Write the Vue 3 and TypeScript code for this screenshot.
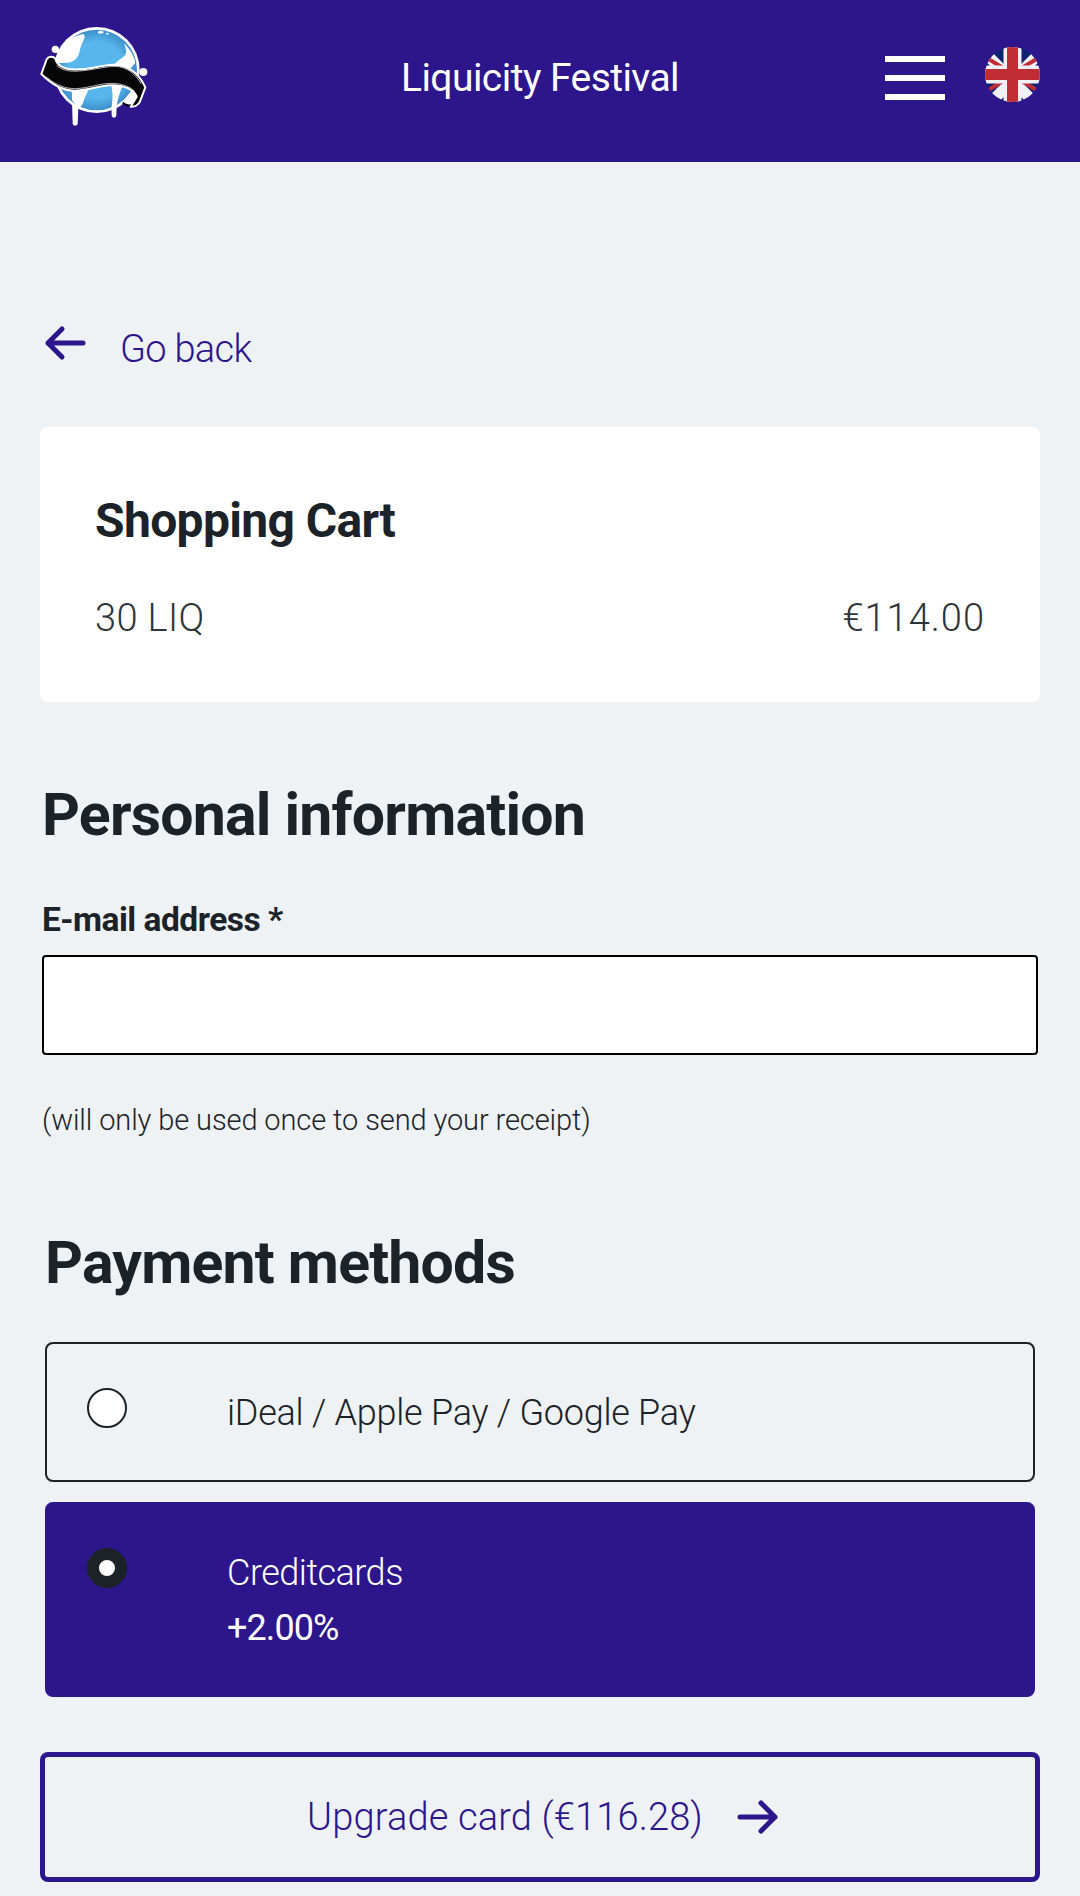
<script setup lang="ts">
const title: string = 'Liquicity Festival'
</script>

<template>
  <div class="page">
    <header class="header">
      <svg class="logo" viewBox="120 60 360 330" width="120" height="110" aria-label="logo">
        <defs>
          <radialGradient id="globe-blue" cx="50%" cy="50%" r="50%">
            <stop offset="70%" stop-color="#58b6ec" />
            <stop offset="100%" stop-color="#3d8fcb" />
          </radialGradient>
        </defs>
        <g fill="#fff">
          <circle cx="166" cy="148" r="11" />
          <circle cx="430" cy="216" r="12" />
          <path d="M216 300H236L233 372A8 8 0 0 1 218 372Z" />
          <path d="M334 290H351L349 346A7 7 0 0 1 335 346Z" />
          <circle cx="290" cy="210" r="129" />
        </g>
        <circle cx="290" cy="210" r="121" fill="url(#globe-blue)" />
        <g fill="#fff">
          <path d="M248 102C264 106 244 128 240 150C236 172 222 190 196 188L170 190C168 168 182 138 204 122C218 112 232 106 248 102Z" />
          <path d="M372 130C384 142 400 160 406 188L392 205L340 196C346 186 366 176 376 164C382 154 376 142 372 130Z" />
          <path d="M216 262H268C262 280 252 296 248 312L236 328L216 300Z" />
          <path d="M332 250H372C362 270 352 296 350 322L334 328C338 302 340 276 332 250Z" />
          <ellipse cx="302" cy="97" rx="9" ry="4" />
          <ellipse cx="322" cy="101" rx="4" ry="2.500" />
        </g>
        <path d="M402 262C412 278 416 298 402 312C390 320 376 316 368 308" fill="#fff" stroke="#080808" stroke-width="6" />
        <path d="M124 222L140 178C146 168 160 168 166 176C172 198 196 210 236 208C280 206 300 196 340 194C388 194 420 226 436 262L420 304C416 314 404 322 392 320L410 290C402 270 374 254 330 256C296 258 266 270 222 272C184 272 150 248 124 222Z" fill="#060606" stroke="#fff" stroke-width="6" stroke-linejoin="round" />
        <path d="M170 196C188 212 210 215 238 213C280 210 310 200 344 199C382 200 406 222 424 252M140 232C170 256 196 266 226 266C270 264 300 250 332 250C364 250 388 258 404 274" fill="none" stroke="#d8d8d8" stroke-width="2.500" />
      </svg>
      <h1 class="brand">{{ title }}</h1>
      <div class="burger"><span></span><span></span><span></span></div>
      <svg class="flag" viewBox="0 0 55 55" width="55" height="55" aria-label="English">
        <defs><clipPath id="flag-circle"><circle cx="27.500" cy="27.500" r="27.500" /></clipPath></defs>
        <g clip-path="url(#flag-circle)">
          <rect width="55" height="55" fill="#0d2273" />
          <path d="M0 6L49 55M55 6L6 55" stroke="#f0f0f6" stroke-width="11" />
          <path d="M0 10L20 22M55 10L35 22M0 45L20 33M35 33L55 45" stroke="#c12c35" stroke-width="4" />
          <path d="M27.500 0V55M0 27.500H55" stroke="#f0f0f6" stroke-width="18" />
          <path d="M27.500 0V55M0 27.500H55" stroke="#c12c35" stroke-width="11" />
        </g>
      </svg>
    </header>

    <main class="content">
      <a class="back">
        <svg viewBox="0 0 42 36" width="42" height="36"><path d="M39 18H4M18 4L4 18L18 32" /></svg>
        <span>Go back</span>
      </a>

      <section class="cart">
        <h2>Shopping Cart</h2>
        <div class="cart-row"><span>30 LIQ</span><span>€114.00</span></div>
      </section>

      <section class="personal">
        <h2 class="heading">Personal information</h2>
        <label class="label" for="email">E-mail address *</label>
        <input id="email" class="input" type="email" />
        <p class="hint">(will only be used once to send your receipt)</p>
      </section>

      <section class="payment">
        <h2 class="heading">Payment methods</h2>
        <div class="option">
          <span class="radio"></span>
          <div class="option-text">iDeal / Apple Pay / Google Pay</div>
        </div>
        <div class="option selected">
          <span class="radio checked"></span>
          <div class="option-text">Creditcards<div class="fee">+2.00%</div></div>
        </div>
      </section>

      <button class="submit" type="button">
        <span>Upgrade card (€116.28)</span>
        <svg viewBox="0 0 42 36" width="42" height="36"><path d="M3 18H38M24 4L38 18L24 32" /></svg>
      </button>
    </main>
  </div>
</template>

<style>
html, body { margin: 0; background: #eef2f5; }
</style>

<style scoped>
* { box-sizing: border-box; }
.page {
  width: 1080px;
  height: 1896px;
  overflow: hidden;
  background: #eef2f5;
  color: #1b2228;
  font-family: Roboto, "Liberation Sans", sans-serif;
}
.header {
  position: relative;
  height: 162px;
  background: #2d158c;
  display: flex;
  align-items: center;
  padding: 0 40px;
}
.logo { margin-top: -12px; }
.brand {
  position: absolute;
  left: 0;
  right: 0;
  margin: 0;
  text-align: center;
  color: #fff;
  font-size: 39px;
  font-weight: 400;
  letter-spacing: -0.55px;
  top: 53px;
  line-height: 50px;
}
.burger {
  margin-left: auto;
  width: 60px;
  display: flex;
  flex-direction: column;
  gap: 12.500px;
  margin-top: -6px;
}
.burger span { display: block; height: 6.500px; background: #fff; }
.flag { margin-left: 40px; margin-top: -13px; }
.content { padding: 0 40px; }
.back {
  display: flex;
  align-items: center;
  gap: 34px;
  margin: 162px 0 0 4px;
  height: 50px;
  color: #2d158c;
  font-size: 38px;
  font-weight: 300;
  letter-spacing: -0.7px;
}
.back svg { margin-top: -12px; }
.back svg path, .submit svg path {
  fill: none;
  stroke: #2d158c;
  stroke-width: 5;
  stroke-linecap: round;
  stroke-linejoin: round;
}
.cart {
  margin-top: 53px;
  height: 275px;
  background: #fff;
  border-radius: 8px;
  padding: 64px 55px 0;
}
.cart h2 {
  margin: 0;
  font-size: 48px;
  line-height: 60px;
  font-weight: 700;
  letter-spacing: -0.65px;
}
.cart-row {
  display: flex;
  justify-content: space-between;
  margin-top: 44px;
  font-size: 38px;
  line-height: 46px;
  font-weight: 300;
  letter-spacing: 0.4px;
  color: #2f3438;
}
.cart-row span:last-child { letter-spacing: 1px; }
.personal { margin: 0 2px; }
.heading {
  margin: 0;
  font-size: 59px;
  line-height: 70px;
  font-weight: 700;
  letter-spacing: -0.8px;
}
.personal .heading { margin-top: 78px; }
.label {
  display: block;
  margin-top: 50px;
  font-size: 33.500px;
  line-height: 40px;
  font-weight: 700;
  letter-spacing: -0.5px;
}
.input {
  display: block;
  width: 100%;
  height: 100px;
  margin-top: 15px;
  background: #fff;
  border: 2px solid #000;
  border-radius: 4px;
}
.hint {
  margin: 48px 0 0;
  font-size: 29px;
  line-height: 34px;
  font-weight: 300;
  letter-spacing: -0.1px;
}
.payment { margin: 91px 5px 0 5px; }
.payment .heading { margin-bottom: 44px; }
.option {
  display: flex;
  align-items: flex-start;
  height: 140px;
  padding: 46px 0 0 41px;
  border: 2px solid #1b2228;
  border-radius: 8px;
  font-size: 36px;
  line-height: 46px;
  font-weight: 300;
  letter-spacing: -0.25px;
}
.option.selected {
  height: 195px;
  margin-top: 20px;
  background: #2d158c;
  border-color: #2d158c;
  color: #fff;
  padding-top: 46px;
  letter-spacing: -0.5px;
}
.radio {
  flex: none;
  width: 40px;
  height: 40px;
  margin-top: -2px;
  margin-left: -1px;
  background: #fff;
  border: 2px solid #1b2228;
  border-radius: 50%;
}
.radio.checked { border-width: 12.500px; }
.option-text { margin-left: 100px; }
.fee { margin-top: 9px; font-weight: 400; letter-spacing: -0.9px; }
.submit {
  display: flex;
  align-items: center;
  justify-content: center;
  gap: 34px;
  width: 100%;
  height: 130px;
  margin-top: 55px;
  padding-left: 12px;
  background: transparent;
  border: 5px solid #2d158c;
  border-radius: 8px;
  color: #2d158c;
  font-family: inherit;
  font-size: 38px;
  font-weight: 300;
  letter-spacing: 0.15px;
}
</style>
